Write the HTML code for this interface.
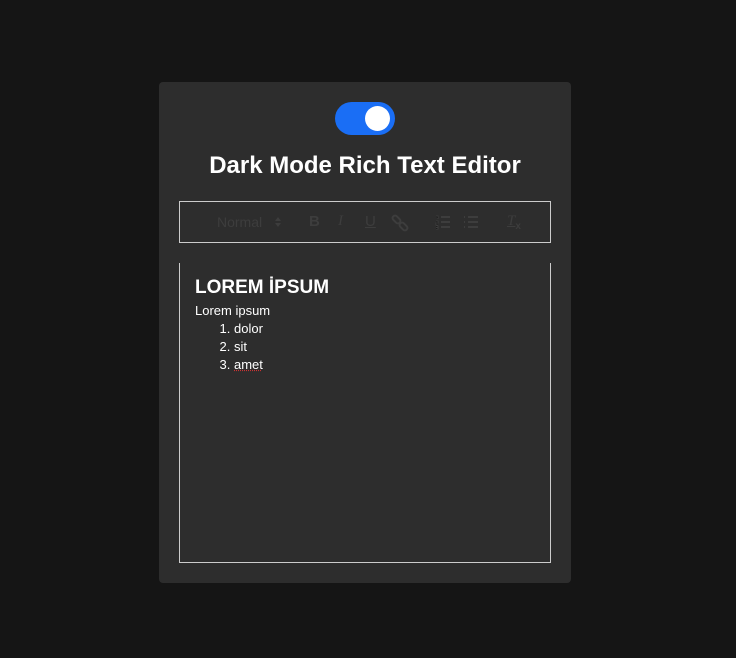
<!DOCTYPE html>
<html><head><style>
body{margin:0;background:#151515;width:736px;height:658px;overflow:hidden;font-family:"Liberation Sans",Arial,sans-serif;color:#fff}
.card{position:absolute;left:159px;top:82px;width:412px;height:501px;background:#2d2d2d;border-radius:4px}
.tog{position:absolute;left:176px;top:20px;width:60px;height:33px;background:#1a6ef5;border-radius:17px}
.tog:after{content:"";position:absolute;right:5px;top:4px;width:25px;height:25px;background:#fff;border-radius:50%}
h1{position:absolute;left:0;right:0;top:70px;margin:0;text-align:center;font-size:24px;font-weight:bold}
.tb{position:absolute;left:20px;top:119px;width:370px;height:40px;border:1px solid #ccc}
.ed{position:absolute;left:20px;top:181px;width:370px;height:299px;border:1px solid #ccc;border-top:none}
.i{position:absolute;color:#3d3d3d;font-size:15px;top:11px}
.c{position:absolute;left:15px;top:14px;font-size:13px}
</style></head><body>
<div class="card">
<div class="tog"></div>
<h1>Dark Mode Rich Text Editor</h1>
<div class="tb">
<span class="i" style="left:37px;font-size:14px;top:12px">Normal</span>
<svg style="position:absolute;left:94px;top:14px" width="8" height="12"><path d="M1 5L4 1 7 5ZM1 7L4 11 7 7Z" fill="#3d3d3d"/></svg>
<span class="i" style="left:129px;font-weight:bold">B</span>
<span class="i" style="left:158px;font-style:italic;font-family:'Liberation Serif',serif">I</span>
<span class="i" style="left:185px;text-decoration:underline">U</span>
<svg style="position:absolute;left:211px;top:12px" width="18" height="18" fill="none" stroke="#3d3d3d" stroke-width="2"><rect x="1" y="3" width="9" height="5" rx="2.5" transform="rotate(45 5.5 5.5)"/><rect x="8" y="10" width="9" height="5" rx="2.5" transform="rotate(45 12.5 12.5)"/></svg>
<svg style="position:absolute;left:255px;top:13px" width="16" height="15" stroke="#3d3d3d" stroke-width="2"><path d="M6 2H15M6 7H15M6 12H15"/><path d="M1 1H3V4M1 6H3V8H1V10H3M1 11H3V14H1M1 12.5H3" stroke-width="1"/></svg>
<svg style="position:absolute;left:283px;top:13px" width="16" height="15" stroke="#3d3d3d" stroke-width="2"><path d="M5 2H15M5 7H15M5 12H15M1 2H2M1 7H2M1 12H2"/></svg>
<span class="i" style="left:327px;font-style:italic;font-family:'Liberation Serif',serif;text-decoration:underline">T<sub style="font-size:10px;font-style:normal;font-weight:bold;font-family:'Liberation Sans',sans-serif">x</sub></span>
</div>
<div class="ed"><div class="c">
<div style="font-size:19px;font-weight:bold;margin-bottom:4px">LOREM İPSUM</div>
<div>Lorem ipsum</div>
<ol style="margin:2px 0 0;padding-left:39px;line-height:18px"><li>dolor</li><li>sit</li><li><span style="text-decoration:underline dotted #c33">amet</span></li></ol>
</div></div>
</div>
</body></html>
